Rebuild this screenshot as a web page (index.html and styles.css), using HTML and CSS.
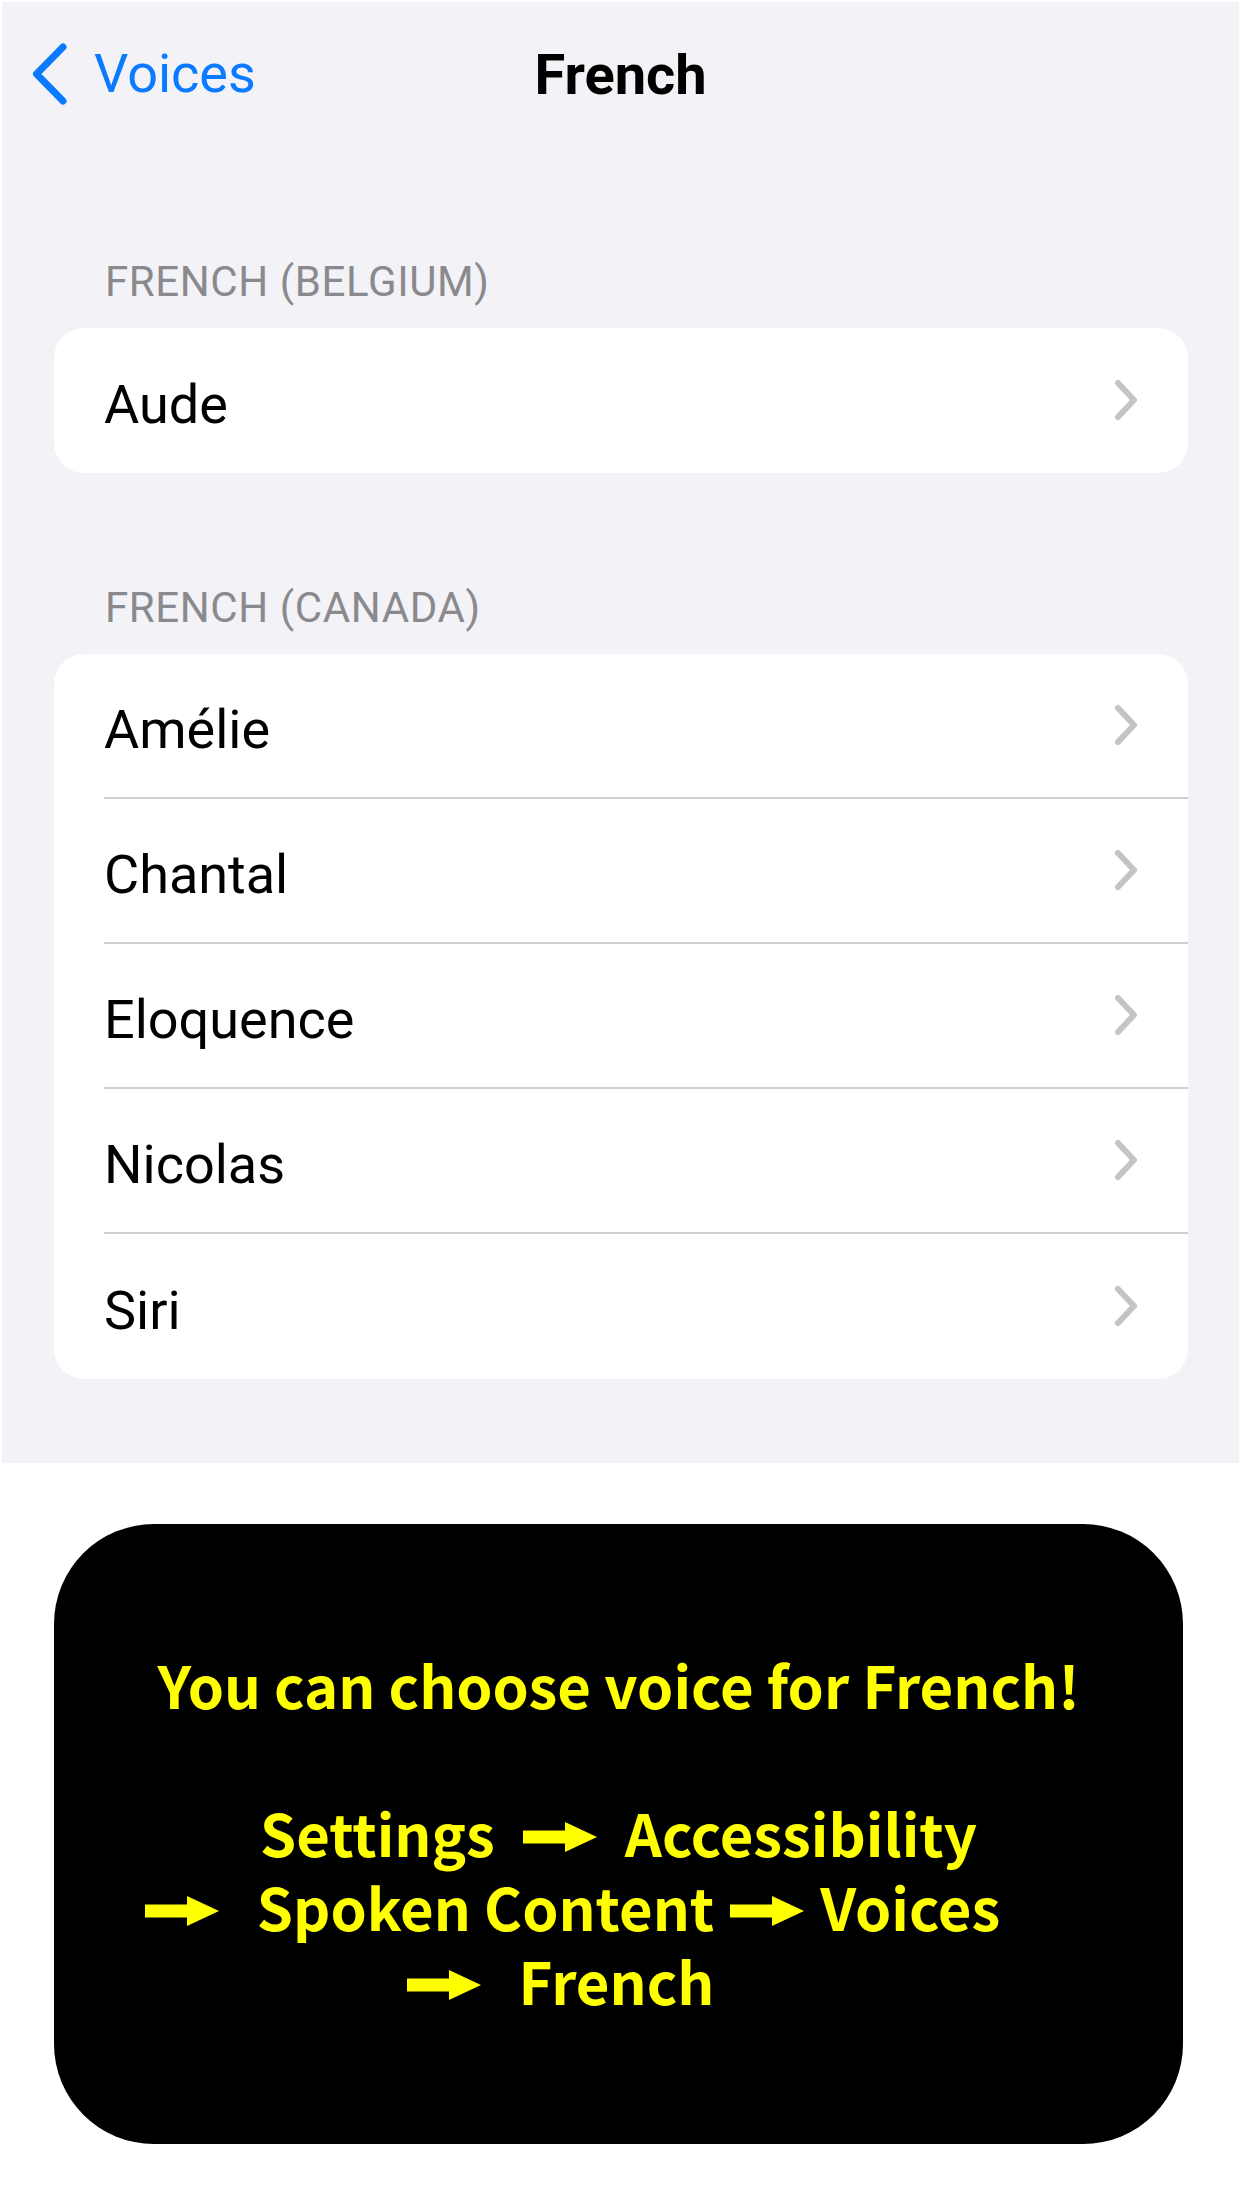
FILE: index.html
```html
<!DOCTYPE html>
<html lang="en">
<head>
<meta charset="utf-8">
<title>French Voices</title>
<link rel="stylesheet" href="styles.css">
</head>
<body>
<div class="screen">
  <header class="nav">
    <div class="nav-left">
      <svg class="back-chev" width="36" height="62" viewBox="0 0 36 62"><path d="M31 4 L4.5 31 L31 58" fill="none" stroke="#0a7aff" stroke-width="7" stroke-linecap="round" stroke-linejoin="round"/></svg>
      <span class="back-label">Voices</span>
    </div>
    <div class="nav-title">French</div>
    <div class="nav-right"></div>
  </header>

  <section class="group first">
    <div class="group-header">FRENCH (BELGIUM)</div>
    <div class="card">
      <div class="row"><div class="row-inner"><span class="row-label">Aude</span><svg class="chev" width="24" height="42" viewBox="0 0 24 42"><path d="M4 4 L20 21 L4 38" fill="none" stroke="#c4c4c7" stroke-width="6" stroke-linecap="round" stroke-linejoin="round"/></svg></div></div>
    </div>
  </section>

  <section class="group">
    <div class="group-header">FRENCH (CANADA)</div>
    <div class="card">
      <div class="row"><div class="row-inner"><span class="row-label">Amélie</span><svg class="chev" width="24" height="42" viewBox="0 0 24 42"><path d="M4 4 L20 21 L4 38" fill="none" stroke="#c4c4c7" stroke-width="6" stroke-linecap="round" stroke-linejoin="round"/></svg></div></div>
      <div class="row"><div class="row-inner"><span class="row-label">Chantal</span><svg class="chev" width="24" height="42" viewBox="0 0 24 42"><path d="M4 4 L20 21 L4 38" fill="none" stroke="#c4c4c7" stroke-width="6" stroke-linecap="round" stroke-linejoin="round"/></svg></div></div>
      <div class="row"><div class="row-inner"><span class="row-label">Eloquence</span><svg class="chev" width="24" height="42" viewBox="0 0 24 42"><path d="M4 4 L20 21 L4 38" fill="none" stroke="#c4c4c7" stroke-width="6" stroke-linecap="round" stroke-linejoin="round"/></svg></div></div>
      <div class="row"><div class="row-inner"><span class="row-label">Nicolas</span><svg class="chev" width="24" height="42" viewBox="0 0 24 42"><path d="M4 4 L20 21 L4 38" fill="none" stroke="#c4c4c7" stroke-width="6" stroke-linecap="round" stroke-linejoin="round"/></svg></div></div>
      <div class="row"><div class="row-inner"><span class="row-label">Siri</span><svg class="chev" width="24" height="42" viewBox="0 0 24 42"><path d="M4 4 L20 21 L4 38" fill="none" stroke="#c4c4c7" stroke-width="6" stroke-linecap="round" stroke-linejoin="round"/></svg></div></div>
    </div>
  </section>
</div>

<div class="tip">
  <div class="tip-line">You can choose voice for French!</div>
  <div class="tip-line blank"></div>
  <div class="tip-line l2">Settings<svg class="arrow" width="74" height="30" viewBox="0 0 74 30"><path d="M0 8.5 H42 V0 L74 15 L42 30 V21.5 H0 Z" fill="#ffff00"/></svg>Accessibility</div>
  <div class="tip-line l3"><svg class="arrow lead" width="74" height="30" viewBox="0 0 74 30"><path d="M0 8.5 H42 V0 L74 15 L42 30 V21.5 H0 Z" fill="#ffff00"/></svg>Spoken Content<svg class="arrow tight" width="74" height="30" viewBox="0 0 74 30"><path d="M0 8.5 H42 V0 L74 15 L42 30 V21.5 H0 Z" fill="#ffff00"/></svg>Voices</div>
  <div class="tip-line l4"><svg class="arrow lead" width="74" height="30" viewBox="0 0 74 30"><path d="M0 8.5 H42 V0 L74 15 L42 30 V21.5 H0 Z" fill="#ffff00"/></svg>French</div>
</div>
</body>
</html>
```

FILE: styles.css
```css
* { box-sizing: border-box; }

html, body {
  margin: 0;
  padding: 0;
  background: #ffffff;
}

body {
  width: 1242px;
  height: 2208px;
  overflow: hidden;
  font-family: Roboto, "Liberation Sans", sans-serif;
}

.screen {
  margin: 2px 3px 0 2px;
  height: 1461px;
  background: #f2f2f7;
}

.nav {
  height: 144px;
  display: grid;
  grid-template-columns: 1fr auto 1fr;
  align-items: center;
}

.nav-left {
  display: flex;
  align-items: center;
  padding-left: 30px;
}

.back-chev {
  display: block;
  margin-right: 26px;
}

.back-label {
  font-size: 54px;
  color: #0a7aff;
  line-height: 64px;
}

.nav-title {
  font-size: 56px;
  font-weight: 700;
  color: #000;
  line-height: 64px;
  padding-top: 2px;
}

.group {
  margin-top: 111px;
}

.group.first {
  margin-top: 0;
  padding-top: 112px;
}

.group-header {
  font-size: 42px;
  line-height: 48px;
  letter-spacing: 0.6px;
  color: #8a8a8e;
  padding-left: 103px;
  margin-bottom: 22px;
}

.card {
  margin: 0 51px 0 52px;
  background: #ffffff;
  border-radius: 30px;
  overflow: hidden;
}

.row {
  padding-left: 50px;
}

.row-inner {
  height: 145px;
  display: flex;
  align-items: center;
  justify-content: space-between;
  padding-right: 50px;
  padding-top: 8px;
  border-bottom: 2px solid #cfcfd3;
}

.row:last-child .row-inner {
  border-bottom: none;
}

.row-label {
  font-size: 54px;
  color: #000;
  line-height: 64px;
}

.chev {
  display: block;
  margin-top: -9px;
}

.tip {
  margin: 61px 0 0 54px;
  width: 1129px;
  height: 620px;
  background: #000;
  border-radius: 100px;
  padding-top: 123px;
  font-family: "Noto Sans CJK KR", "Noto Sans", sans-serif;
  font-weight: 700;
  font-size: 58px;
  color: #ffff00;
}

.tip-line {
  height: 74px;
  line-height: 74px;
  text-align: center;
  white-space: nowrap;
}

.arrow {
  vertical-align: 5px;
  margin: 0 28px;
}

.arrow.lead {
  margin-left: 0;
  margin-right: 38px;
}

.arrow.tight {
  margin: 0 16px;
}

.l3 {
  padding-right: 92px;
}

.l4 {
  padding-right: 116px;
}
```
